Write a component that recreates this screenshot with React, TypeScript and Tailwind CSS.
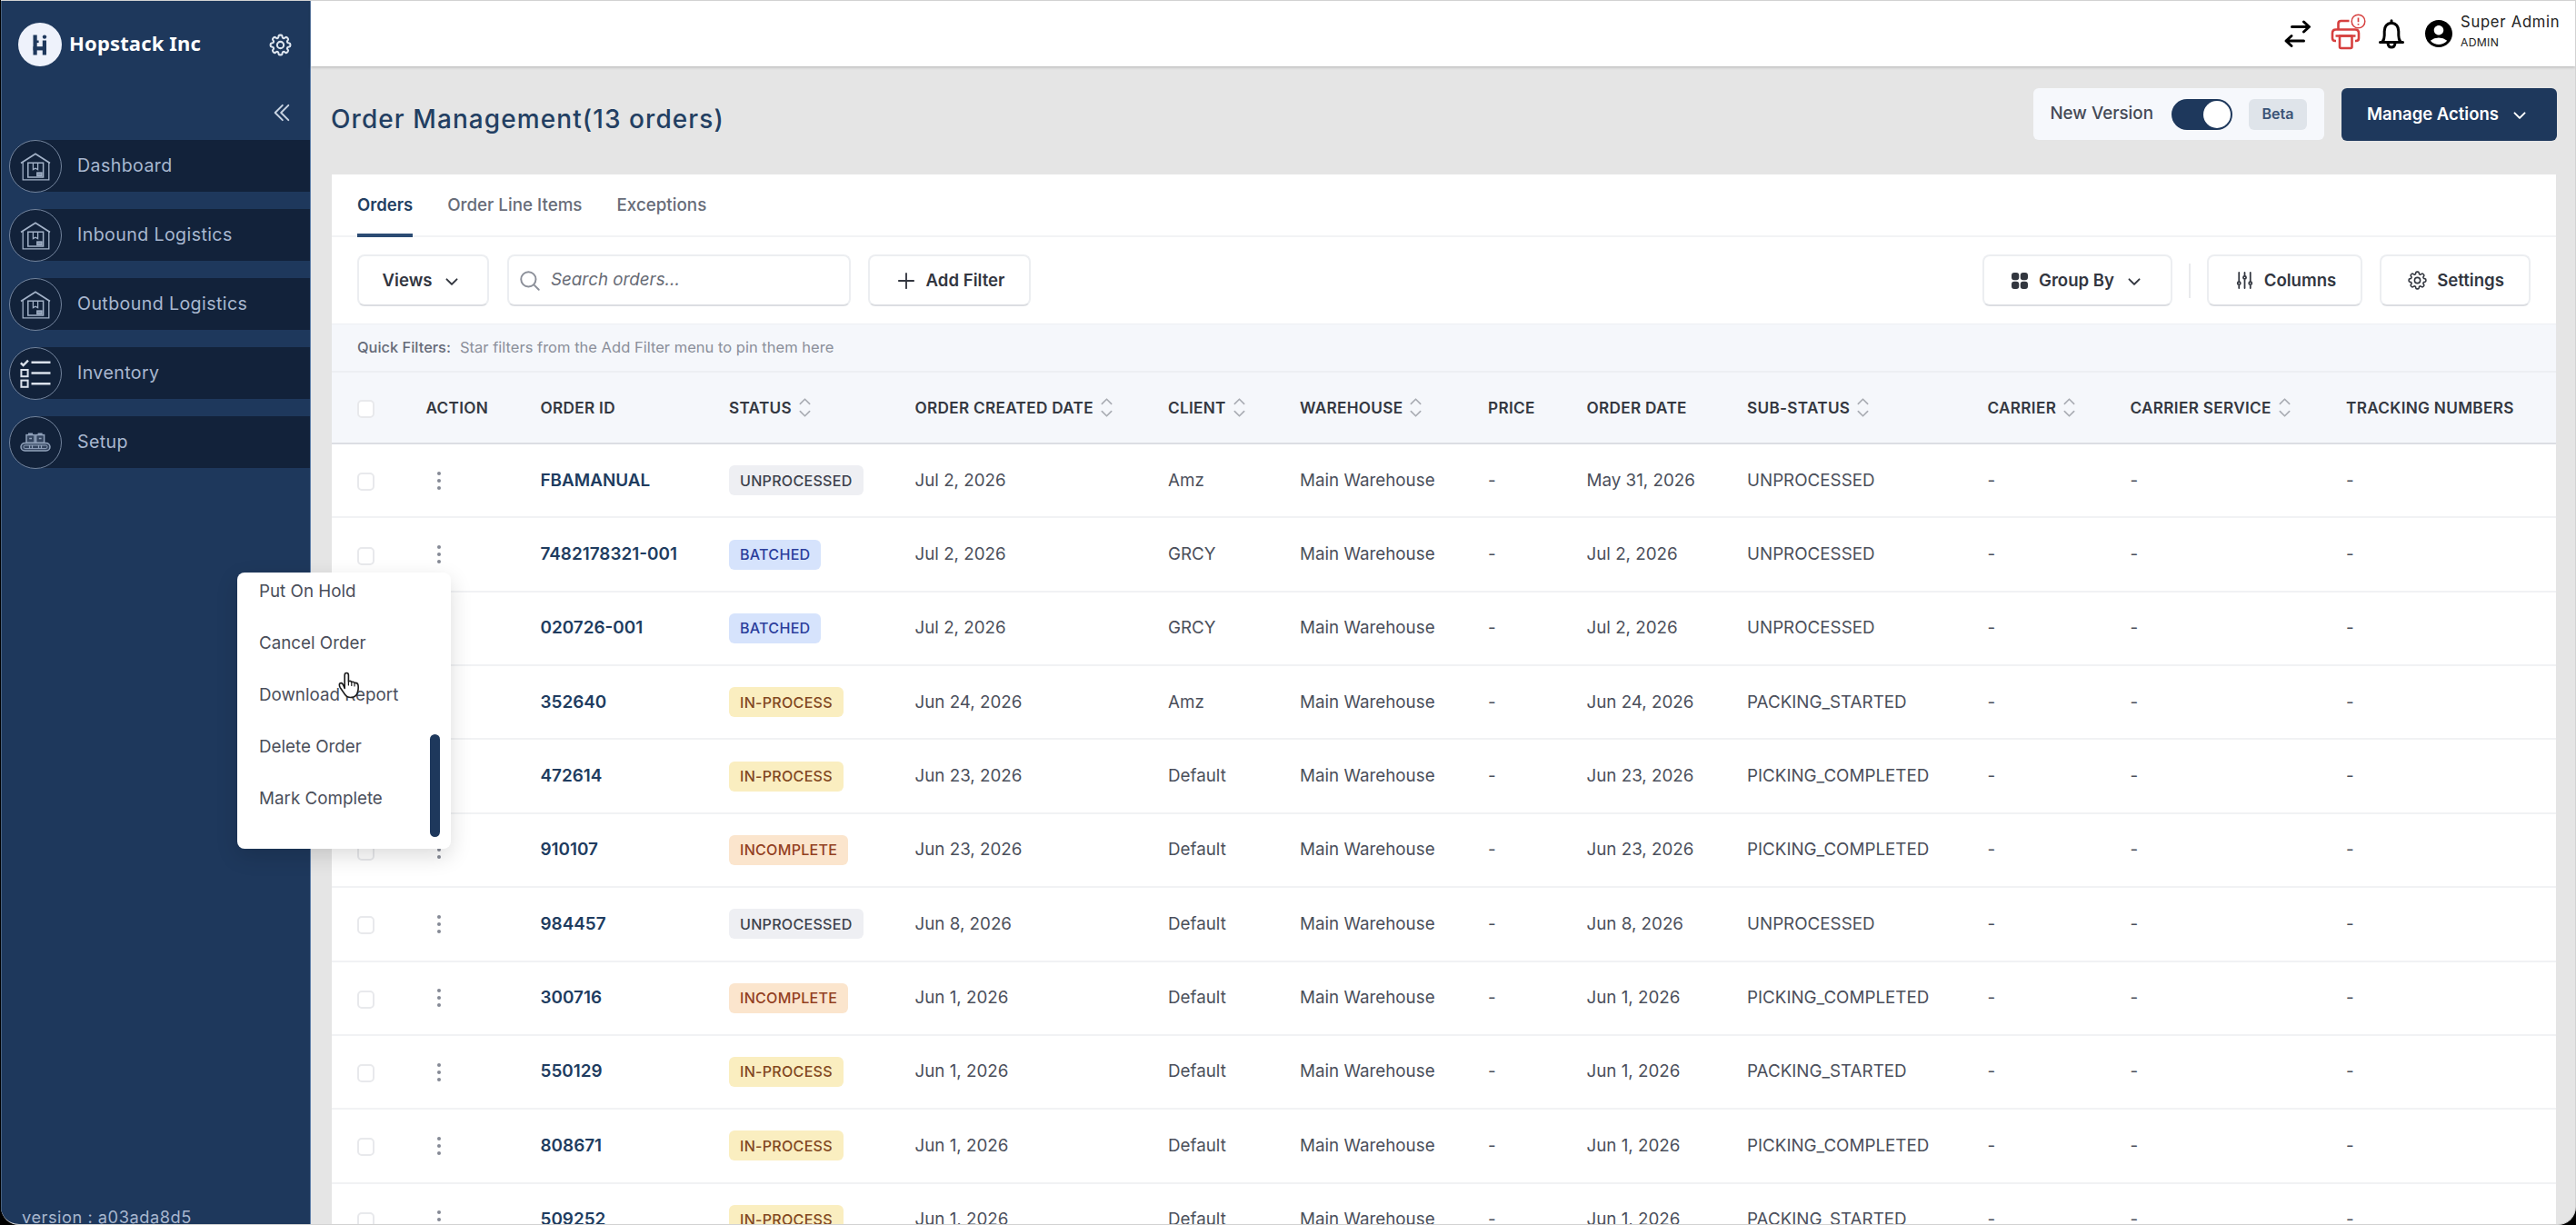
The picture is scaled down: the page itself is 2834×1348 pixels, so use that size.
import type { ReactNode } from "react"
import {
    HiMiniChevronDown,
    HiOutlineAdjustmentsVertical,
    HiOutlineChevronDoubleLeft,
    HiOutlineChevronUpDown,
    HiOutlineCog8Tooth,
    HiOutlineMagnifyingGlass,
    HiOutlinePlus,
    HiSquares2X2,
} from "react-icons/hi2"
import { MdAccountCircle } from "react-icons/md"

type Status = "UNPROCESSED" | "BATCHED" | "IN-PROCESS" | "INCOMPLETE"

type Order = {
    id: string
    status: Status
    date: string
    orderDate?: string
    client: string
    subStatus: string
}

const orders: Order[] = [
    { id: "FBAMANUAL", status: "UNPROCESSED", date: "Jul 2, 2026", orderDate: "May 31, 2026", client: "Amz", subStatus: "UNPROCESSED" },
    { id: "7482178321-001", status: "BATCHED", date: "Jul 2, 2026", client: "GRCY", subStatus: "UNPROCESSED" },
    { id: "020726-001", status: "BATCHED", date: "Jul 2, 2026", client: "GRCY", subStatus: "UNPROCESSED" },
    { id: "352640", status: "IN-PROCESS", date: "Jun 24, 2026", client: "Amz", subStatus: "PACKING_STARTED" },
    { id: "472614", status: "IN-PROCESS", date: "Jun 23, 2026", client: "Default", subStatus: "PICKING_COMPLETED" },
    { id: "910107", status: "INCOMPLETE", date: "Jun 23, 2026", client: "Default", subStatus: "PICKING_COMPLETED" },
    { id: "984457", status: "UNPROCESSED", date: "Jun 8, 2026", client: "Default", subStatus: "UNPROCESSED" },
    { id: "300716", status: "INCOMPLETE", date: "Jun 1, 2026", client: "Default", subStatus: "PICKING_COMPLETED" },
    { id: "550129", status: "IN-PROCESS", date: "Jun 1, 2026", client: "Default", subStatus: "PACKING_STARTED" },
    { id: "808671", status: "IN-PROCESS", date: "Jun 1, 2026", client: "Default", subStatus: "PICKING_COMPLETED" },
    { id: "509252", status: "IN-PROCESS", date: "Jun 1, 2026", client: "Default", subStatus: "PACKING_STARTED" },
]

const columns = [
    { name: "ACTION" },
    { name: "ORDER ID" },
    { name: "STATUS", sort: true },
    { name: "ORDER CREATED DATE", sort: true },
    { name: "CLIENT", sort: true },
    { name: "WAREHOUSE", sort: true },
    { name: "PRICE" },
    { name: "ORDER DATE" },
    { name: "SUB-STATUS", sort: true },
    { name: "CARRIER", sort: true },
    { name: "CARRIER SERVICE", sort: true },
    { name: "TRACKING NUMBERS" },
]

const badgeColors: Record<Status, string> = {
    "UNPROCESSED": "bg-[#eeeff3] text-[#3c414c]",
    "BATCHED": "bg-[#d6e3fc] text-[#2c3f9c]",
    "IN-PROCESS": "bg-[#faeec0] text-[#82481f]",
    "INCOMPLETE": "bg-[#fbe5cd] text-[#93401f]",
}

const rowGrid = "grid grid-cols-[75.5px_126px_207.5px_204.5px_278.5px_145px_207px_108.5px_176.5px_264.5px_157px_237.5px_1fr] items-center pl-7 whitespace-nowrap"

export default function App() {
    return (
        <div className="w-[2834px] h-[1348px] overflow-hidden bg-black pl-px font-['Inter',sans-serif]">
            <div className="relative flex h-full overflow-hidden rounded-b-[20px] border-t border-b border-r border-[#d2d2d2] bg-[#e5e5e5]">
                <Sidebar />
                <div className="flex flex-col flex-1 min-w-0">
                    <TopBar />
                    <PageHeader />
                    <div className="ml-[23px] mr-[21px] flex-1 bg-white min-h-0 overflow-hidden">
                        <Tabs />
                        <Toolbar />
                        <OrdersTable />
                    </div>
                </div>
                <ActionMenu />
            </div>
        </div>
    )
}

function Sidebar() {
    const nav = [
        { label: "Dashboard", icon: <WarehouseIcon /> },
        { label: "Inbound Logistics", icon: <WarehouseIcon /> },
        { label: "Outbound Logistics", icon: <WarehouseIcon /> },
        { label: "Inventory", icon: <ChecklistIcon /> },
        { label: "Setup", icon: <ConveyorIcon /> },
    ]

    return (
        <aside className="w-[341px] shrink-0 flex flex-col bg-[#1e385c] border-l border-r border-l-[#46607f] border-r-[#5f7fa8]">
            <div className="flex items-center mt-6 h-12 pl-[18px] pr-[18px]">
                <Logo />
                <p className="ml-2 font-['Noto_Sans',sans-serif] font-bold text-[22px] tracking-[0.15px] text-white -mt-[3px]">Hopstack Inc</p>
                <HiOutlineCog8Tooth size={29} strokeWidth={1.7} className="ml-auto text-[#dce4ee]" />
            </div>
            <div className="flex justify-end mt-[38px] pr-[18px]">
                <HiOutlineChevronDoubleLeft size={26} strokeWidth={1.8} className="text-[#c8d3e2]" />
            </div>
            <nav className="flex flex-col gap-[19px] mt-[17px] pl-2">
                {nav.map(n => (
                    <div key={n.label} className="flex h-[57px]">
                        <div className="relative z-10 flex items-center justify-center size-[58px] shrink-0 rounded-full border border-[#73849d] bg-[#12223a]">
                            {n.icon}
                        </div>
                        <div className="flex items-center flex-1 -ml-[29px] pl-[46px] bg-[#12223a] text-[19.6px] tracking-[0.4px] text-[#a8b7cf]">
                            {n.label}
                        </div>
                    </div>
                ))}
            </nav>
            <p className="mt-auto -mb-[6px] pl-[22px] text-[18.3px] tracking-[0.5px] text-[#a8b7cf]">version : a03ada8d5</p>
        </aside>
    )
}

function TopBar() {
    return (
        <header className="relative flex items-center justify-end h-[72px] shrink-0 bg-white shadow-[0_1px_3px_rgba(0,0,0,0.22)] pr-4">
            <TransferIcon />
            <PrinterAlertIcon />
            <BellIcon />
            <MdAccountCircle size={36} className="ml-[19px] text-black" />
            <div className="ml-[6px] w-[110px] -mt-[6px] text-[#222]">
                <p className="text-[16.6px] leading-[25px] tracking-[0.75px] whitespace-nowrap">Super Admin</p>
                <p className="text-[12.2px] leading-[20px] tracking-[0.3px]">ADMIN</p>
            </div>
        </header>
    )
}

function PageHeader() {
    return (
        <div className="flex items-center h-[119px] shrink-0 pl-[22px] pr-[20px] pb-[14px]">
            <h1 className="mt-[10px] text-[28px] font-medium tracking-[1.08px] text-[#233f62]">Order Management(13 orders)</h1>
            <div className="ml-auto flex items-center h-[57px] rounded-md bg-[#f6f8fc] pl-[18px] pr-[19px]">
                <span className="text-[18.8px] font-medium text-[#454a56]">New Version</span>
                <div className="ml-5 flex justify-end w-[67px] h-[34px] rounded-full bg-[#1e385c] p-[2px]">
                    <div className="size-[30px] rounded-full bg-white"></div>
                </div>
                <span className="ml-[18px] flex items-center justify-center w-[64px] h-[34px] rounded-md bg-[#dfe4ea] text-[16.1px] font-semibold text-[#3a5376]">Beta</span>
            </div>
            <button className="ml-[19px] flex items-center h-[58px] w-[237px] rounded-md bg-[#1e385c] pl-7 text-[18.5px] font-semibold text-white">
                Manage Actions
                <HiMiniChevronDown size={26} className="ml-[10px]" />
            </button>
        </div>
    )
}

function Tabs() {
    return (
        <div className="flex gap-[38px] h-[69px] pl-7 border-b-2 border-[#f2f3f5] text-[18.8px] font-medium text-[#686d79]">
            <p className="h-[69px] pt-5 border-b-4 border-[#2b4b73] text-[18.5px] font-semibold text-[#233f62]">Orders</p>
            <p className="pt-5">Order Line Items</p>
            <p className="pt-5">Exceptions</p>
        </div>
    )
}

function Toolbar() {
    return (
        <div className="flex items-center h-[95px] px-7">
            <ToolButton className="w-[145px]">
                Views
                <HiMiniChevronDown size={26} />
            </ToolButton>
            <div className="ml-[20px] flex items-center w-[378px] h-[57px] rounded-lg border-2 border-[#eceef1] border-b-[#dcdee2] pl-[10px] text-[#8b8f99]">
                <HiOutlineMagnifyingGlass size={26} strokeWidth={1.8} />
                <span className="ml-[10px] text-[18.8px] italic text-[#676b75]">Search orders...</span>
            </div>
            <ToolButton className="ml-[19px] w-[179px]">
                <HiOutlinePlus size={26} strokeWidth={1.7} />
                Add Filter
            </ToolButton>
            <ToolButton className="ml-auto w-[209px]">
                <HiSquares2X2 size={24} />
                Group By
                <HiMiniChevronDown size={26} />
            </ToolButton>
            <div className="mx-[18px] w-[2px] h-[38px] bg-[#e9eaed]"></div>
            <ToolButton className="w-[171px]">
                <HiOutlineAdjustmentsVertical size={25} strokeWidth={1.7} />
                Columns
            </ToolButton>
            <ToolButton className="ml-[19px] w-[166px]">
                <HiOutlineCog8Tooth size={25} />
                Settings
            </ToolButton>
        </div>
    )
}

function ToolButton({ children, className }: { children: ReactNode, className: string }) {
    return (
        <button className={`flex items-center justify-center gap-[9px] h-[57px] shrink-0 whitespace-nowrap rounded-lg border-2 border-[#eceef1] border-b-[#dcdee2] bg-white text-[18.6px] font-semibold text-[#32363f] ${className}`}>
            {children}
        </button>
    )
}

function OrdersTable() {
    return (
        <div>
            <div className="flex items-center h-[54px] gap-[10px] pl-7 border-t border-b-2 border-[#edeff3] bg-[#f5f7fb] text-[16.4px]">
                <span className="font-medium text-[#666b78]">Quick Filters:</span>
                <span className="text-[16.55px] text-[#8b8f9a]">Star filters from the Add Filter menu to pin them here</span>
            </div>
            <div className={`${rowGrid} h-[79px] border-b-2 border-[#dcdee3] bg-[#f5f7fb] text-[17.2px] font-semibold tracking-[0.3px] text-[#343841]`}>
                <Checkbox />
                {columns.map(c => (
                    <div key={c.name} className="flex items-center">
                        {c.name}
                        {c.sort && <HiOutlineChevronUpDown size={33} strokeWidth={1.2} className="-ml-[2px] text-[#a9acb3]" />}
                    </div>
                ))}
            </div>
            {orders.map(o => (
                <div key={o.id} className={`${rowGrid} h-[81.36px] border-b-2 border-[#f1f2f4] text-[18.8px] text-[#4b4f5b]`}>
                    <Checkbox />
                    <Dots />
                    <span className="text-[18.9px] font-semibold text-[#203c5f]">{o.id}</span>
                    <div>
                        <span className={`inline-flex items-center h-[33px] px-3 rounded-md text-[16.1px] font-medium tracking-[0.25px] ${badgeColors[o.status]}`}>{o.status}</span>
                    </div>
                    <span>{o.date}</span>
                    <span>{o.client}</span>
                    <span>Main Warehouse</span>
                    <span>-</span>
                    <span>{o.orderDate ?? o.date}</span>
                    <span>{o.subStatus}</span>
                    <span>-</span>
                    <span>-</span>
                    <span>-</span>
                </div>
            ))}
        </div>
    )
}

function Checkbox() {
    return <div className="mt-[3px] w-[19px] h-5 rounded-[5px] border-2 border-[#e8e9ec] bg-white"></div>
}

function Dots() {
    return (
        <div className="flex flex-col gap-1 ml-3">
            <i className="size-1 rounded-full bg-[#858995]"></i>
            <i className="size-1 rounded-full bg-[#858995]"></i>
            <i className="size-1 rounded-full bg-[#858995]"></i>
        </div>
    )
}

function ActionMenu() {
    const actions = ["Put On Hold", "Cancel Order", "Download Report", "Delete Order", "Mark Complete"]
    return (
        <div className="absolute left-[260px] top-[629px] w-[235px] h-[304px] rounded-lg bg-white shadow-[0_8px_24px_rgba(0,0,0,0.14)]">
            <div className="-mt-[7px] pl-6">
                {actions.map(a => (
                    <p key={a} className="flex items-center h-[57px] text-[18.8px] text-[#4b4f5b]">{a}</p>
                ))}
            </div>
            <div className="absolute right-[12px] top-[178px] w-[11px] h-[113px] rounded-full bg-[#1e385c]"></div>
            <HandCursor />
        </div>
    )
}

/* ---------- icons ---------- */

function Logo() {
    return (
        <svg width="48" height="48" viewBox="0 0 48 48">
            <circle cx="24" cy="24" r="24" fill="#eef2fb" />
            <g fill="#1e385c">
                <rect x="16.5" y="13.5" width="4.2" height="22" />
                <rect x="26.8" y="19.5" width="4.2" height="16" />
                <rect x="16.5" y="26.2" width="14" height="4.2" />
                <rect x="20" y="19.5" width="2.6" height="2.6" />
                <circle cx="29" cy="15.6" r="2.2" />
            </g>
        </svg>
    )
}

function WarehouseIcon() {
    return (
        <svg width="34" height="34" viewBox="0 0 34 34" fill="none" stroke="#a3b2c8" strokeWidth="1.3">
            <path d="M1 13.5 17 3.2l16 10.3" strokeWidth="1.8" />
            <path d="M3.2 12.5v19.3h28.6V12.5" />
            <rect x="8.8" y="13.2" width="16.8" height="15.8" strokeWidth="1.5" />
            <path d="M14.4 13.4v7.2l2.6-1.4 2.6 1.4v-7.2" />
            <rect x="18.8" y="24" width="5.2" height="3.4" fill="#8293ab" />
        </svg>
    )
}

function ChecklistIcon() {
    return (
        <svg width="34" height="34" viewBox="0 0 34 34" fill="none" stroke="#dbe2ec" strokeWidth="2">
            <path d="M.8 5.4 3.6 8 9 2.6" strokeWidth="2.4" />
            <path d="M12.5 4.8h21M12.5 16.5h21M12.5 28.3h21" strokeWidth="2.4" />
            <rect x="1.4" y="13" width="7.2" height="7.2" />
            <rect x="1.4" y="24.6" width="7.2" height="7.2" />
        </svg>
    )
}

function ConveyorIcon() {
    return (
        <svg width="34" height="34" viewBox="0 0 34 34" fill="none" stroke="#91a2bb" strokeWidth="1.5">
            <rect x="1" y="17.5" width="32" height="8.6" rx="4.3" fill="#33445e" />
            <rect x="4" y="20" width="26" height="3.6" rx="1.8" strokeWidth="1" />
            <path d="M10.5 20v3.6M13.5 20v3.6M20.5 20v3.6M23.5 20v3.6" strokeWidth="1.2" />
            <rect x="7" y="8.6" width="9" height="8.6" fill="#33445e" />
            <rect x="17.6" y="8.6" width="9" height="8.6" fill="#33445e" />
            <path d="M9 7.2h5M19.6 7.2h5M10.2 12.5h2.8M20.8 12.5h2.8" />
        </svg>
    )
}

function TransferIcon() {
    return (
        <svg width="32" height="32" viewBox="0 0 32 32" fill="none" stroke="#000" strokeWidth="3" strokeLinecap="round" strokeLinejoin="round">
            <path d="M9.500 8.500h18.500M22.500 3l6 5.500-6 5.500" />
            <path d="M22.500 24H4M9 18.500l-6 5.500 6 5.500" />
        </svg>
    )
}

function PrinterAlertIcon() {
    return (
        <svg width="40" height="40" viewBox="0 0 40 40" className="ml-[19px] -mt-[4px]" fill="none" stroke="#d6403f" strokeWidth="2.6" strokeLinejoin="round">
            <path d="M9.5 17.5V11q0-3 3-3h9" />
            <path d="M7 30H6q-3 0-3-3v-5.500q0-4 4-4h21q4 0 4 4V27q0 3-3 3h-1" />
            <path d="M11 24.500h13.500v12q0 1.500-1.500 1.500H12.500q-1.500 0-1.500-1.500z" />
            <path d="M6.500 24.500h22" />
            <circle cx="31.500" cy="8.500" r="7.300" strokeWidth="1.500" fill="#fff" />
            <path d="M31.500 4.500v4.800M31.500 11v1.600" strokeWidth="1.700" />
        </svg>
    )
}

function BellIcon() {
    return (
        <svg width="30" height="34" viewBox="0 0 30 34" className="ml-[13px]" fill="none" stroke="#000" strokeWidth="3" strokeLinejoin="round" strokeLinecap="round">
            <path d="M2.500 26.500h25M5 26q2.200-2.500 2.200-7v-4.500q0-8.300 7.800-9.300 7.800 1 7.800 9.300V19q0 4.500 2.200 7" />
            <path d="M15 2.800v1.500M11 27.500q.5 4.500 4 4.500t4-4.500" />
        </svg>
    )
}

function HandCursor() {
    return (
        <svg width="25" height="31" viewBox="0 0 25 31" className="absolute left-[111px] top-[109px]" fill="#fff" stroke="#1b1b1b" strokeWidth="1.6" strokeLinejoin="round" strokeLinecap="round">
            <path d="M7.200 18.500V4q0-2.500 2.100-2.500T11.400 4v6.800q2.600-1 3.400.7 2.300-.7 3.200 1 3.300-.6 4 2.400.6 4.600-.7 8.100-1.500 5-6.500 5.400-4.800.4-7.300-3.200L2.300 17.700q-1.400-2.400-.7-4.400 1.800-1.800 3.800.9z" />
            <path d="M11.400 11v4M14.800 12v3.400M18 13v3" strokeWidth="1.200" />
        </svg>
    )
}
